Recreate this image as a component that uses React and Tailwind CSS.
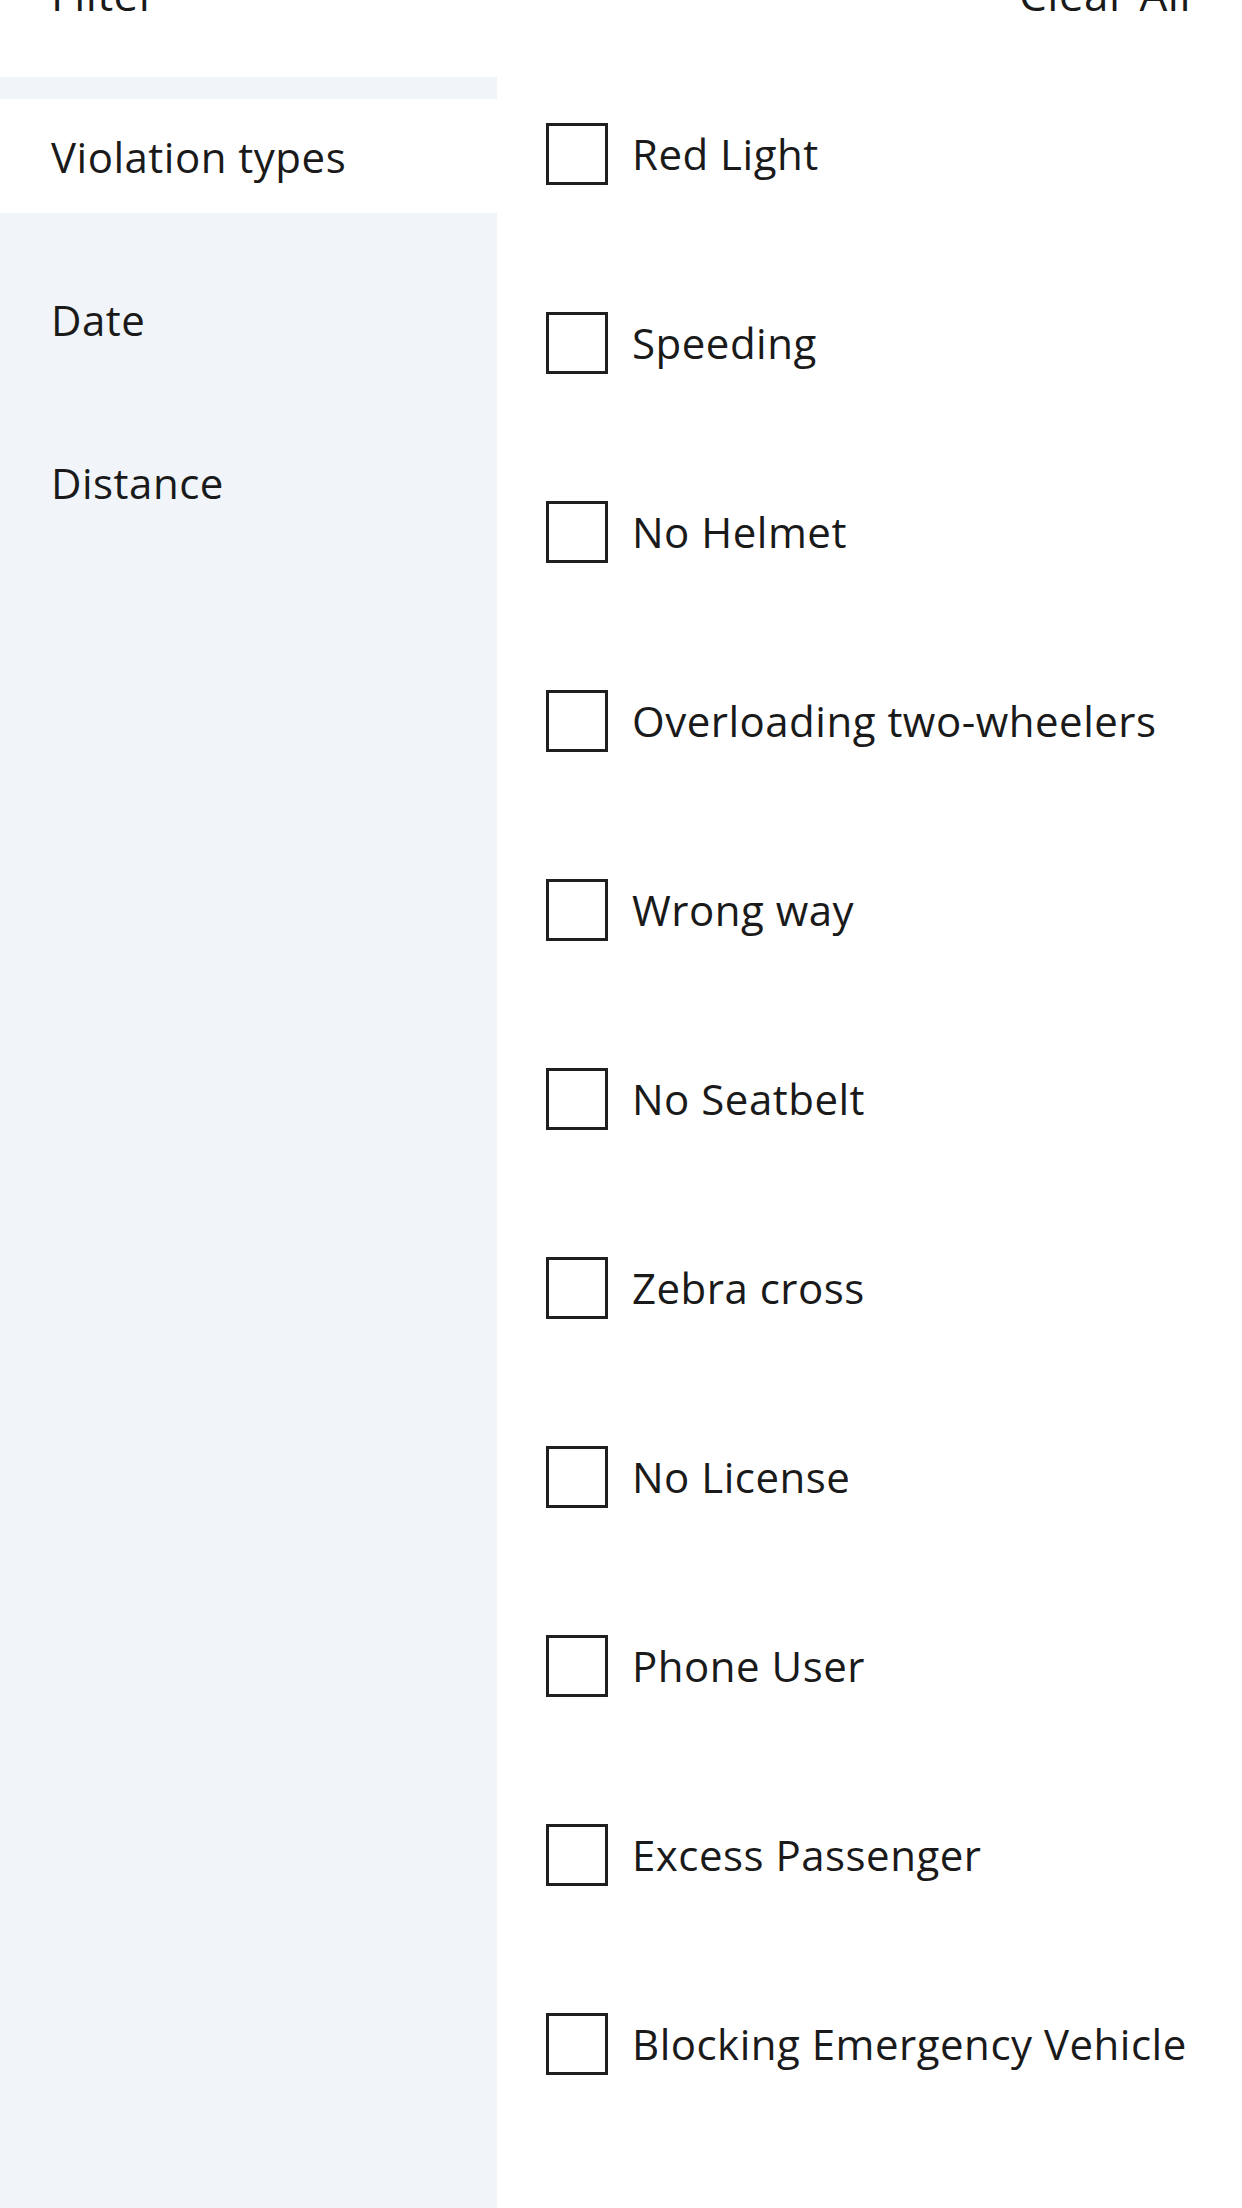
import React from "react";

const violationTypes = [
  "Red Light",
  "Speeding",
  "No Helmet",
  "Overloading two-wheelers",
  "Wrong way",
  "No Seatbelt",
  "Zebra cross",
  "No License",
  "Phone User",
  "Excess Passenger",
  "Blocking Emergency Vehicle",
];

const sections = ["Violation types", "Date", "Distance"];

function FilterCheckbox({ label }) {
  return (
    <label className="flex items-center gap-[24px]">
      <span className="w-[62px] h-[62px] shrink-0 border-[3px] border-[#1f1f1f] bg-white" />
      <span className="text-[42px] leading-[62px] tracking-[0.5px] text-[#1a1a1a]">{label}</span>
    </label>
  );
}

export default function App() {
  const active = "Violation types";

  return (
    <div
      className="w-[1242px] h-[2208px] overflow-hidden bg-white"
      style={{ fontFamily: "'Open Sans', 'Noto Sans', sans-serif" }}
    >
      <div className="h-[77px] flex flex-col">
        <div className="-mt-[31px] flex justify-between px-[51px] text-[44px] leading-[50px] tracking-[0.5px] text-[#1a1a1a]">
          <span>Filter</span>
          <span>Clear All</span>
        </div>
      </div>

      <div className="flex h-[2131px]">
        <div className="w-[497px] shrink-0 bg-[#f1f5f9] pt-[22px] flex flex-col gap-[49px]">
          {sections.map((s) => (
            <div
              key={s}
              className={
                "h-[114px] flex items-center pl-[51px] text-[42px] tracking-[0.5px] text-[#1a1a1a] " +
                (s === active ? "bg-white" : "")
              }
            >
              {s}
            </div>
          ))}
        </div>

        <div className="flex-1 pl-[49px] pt-[46px] flex flex-col gap-[127px]">
          {violationTypes.map((v) => (
            <FilterCheckbox key={v} label={v} />
          ))}
        </div>
      </div>
    </div>
  );
}
